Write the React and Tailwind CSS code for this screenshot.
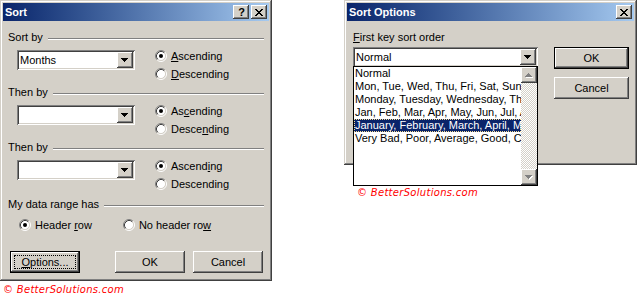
import React from 'react';

// classic 3D edges
const raised = 'shadow-[inset_-1px_-1px_#404040,inset_1px_1px_#ffffff,inset_-2px_-2px_#808080,inset_2px_2px_#d4d0c8]';
const sunken = 'shadow-[inset_1px_1px_#808080,inset_-1px_-1px_#ffffff,inset_2px_2px_#404040,inset_-2px_-2px_#d4d0c8]';
const frame = 'shadow-[inset_-1px_-1px_#404040,inset_1px_1px_#d4d0c8,inset_-2px_-2px_#808080,inset_2px_2px_#ffffff]';
const defBtn = 'shadow-[inset_0_0_0_1px_#000000,inset_-2px_-2px_#404040,inset_2px_2px_#ffffff,inset_-3px_-3px_#808080,inset_3px_3px_#d4d0c8]';

const Arrow = ({ up, disabled }) => {
  const down = 'M0 0h7v1h-7z M1 1h5v1h-5z M2 2h3v1h-3z M3 3h1v1h-1z';
  const upD = 'M3 0h1v1h-1z M2 1h3v1h-3z M1 2h5v1h-5z M0 3h7v1h-7z';
  const d = up ? upD : down;
  return (
    <svg width="8" height="5" shapeRendering="crispEdges">
      {disabled && <path d={d} fill="#ffffff" transform="translate(1 1)" />}
      <path d={d} fill={disabled ? '#808080' : '#000000'} />
    </svg>
  );
};

const CloseGlyph = () => (
  <svg width="8" height="7" shapeRendering="crispEdges">
    <path
      fill="#000"
      d="M0 0h2v1h-2z M6 0h2v1h-2z M1 1h2v1h-2z M5 1h2v1h-2z M2 2h4v1h-4z M3 3h2v1h-2z M2 4h4v1h-4z M1 5h2v1h-2z M5 5h2v1h-2z M0 6h2v1h-2z M6 6h2v1h-2z"
    />
  </svg>
);

const CapBtn = ({ children, className = '' }) => (
  <div className={`w-[16px] h-[14px] bg-[#d4d0c8] flex items-center justify-center ${raised} ${className}`}>
    {children}
  </div>
);

const TitleBar = ({ title, help }) => (
  <div className="h-[18px] flex items-center pl-[2px] pr-[2px] bg-linear-to-r from-[#0a246a] to-[#a6caf0]">
    <span className="flex-1 text-white font-bold text-[11px]">{title}</span>
    {help && (
      <CapBtn className="mr-[2px]">
        <span className="font-bold text-[11px] leading-[11px] pl-[1px]">?</span>
      </CapBtn>
    )}
    <CapBtn>
      <CloseGlyph />
    </CapBtn>
  </div>
);

const Radio = ({ checked, children, className = '' }) => (
  <div className={`flex items-center h-[18px] ${className}`}>
    <svg width="12" height="12" className="shrink-0">
      <circle cx="6" cy="6" r="4.5" fill="#ffffff" />
      <path d="M2.11 9.89 A5.5 5.5 0 0 1 9.89 2.11" stroke="#808080" fill="none" />
      <path d="M9.89 2.11 A5.5 5.5 0 0 1 2.11 9.89" stroke="#ffffff" fill="none" />
      <path d="M2.82 9.18 A4.5 4.5 0 0 1 9.18 2.82" stroke="#404040" fill="none" />
      <path d="M9.18 2.82 A4.5 4.5 0 0 1 2.82 9.18" stroke="#d4d0c8" fill="none" />
      {checked && <circle cx="6" cy="6" r="2" fill="#000000" />}
    </svg>
    <span className="ml-[4px] whitespace-nowrap">{children}</span>
  </div>
);

const Combo = ({ value, className = '' }) => (
  <div className={`h-[20px] bg-white p-[2px] flex ${sunken} ${className}`}>
    <div className="flex-1 pl-[1px] flex items-center whitespace-nowrap overflow-hidden">{value}</div>
    <div className={`w-[16px] bg-[#d4d0c8] flex items-center justify-center ${raised}`}>
      <Arrow />
    </div>
  </div>
);

const Button = ({ children, isDefault, focused, className = '' }) => (
  <div className={`h-[22px] bg-[#d4d0c8] flex ${isDefault ? defBtn : raised} ${focused ? 'p-[4px]' : ''} ${className}`}>
    <div className={`flex-1 flex items-center justify-center ${focused ? 'border border-dotted border-black' : ''}`}>
      {children}
    </div>
  </div>
);

const Header = ({ children, className = '' }) => (
  <div className={`h-[13px] flex items-center ${className}`}>
    <span className="whitespace-nowrap">{children}</span>
    <div className="flex-1 ml-[5px] mt-[3px] border-t border-t-[#808080] border-b border-b-white" />
  </div>
);

const Group = ({ label, value, asc, desc, className = '' }) => (
  <div className={className}>
    <Header>{label}</Header>
    <div className="flex mt-[3px] h-[36px]">
      <Combo value={value} className="ml-[9px] mt-[3px] w-[118px]" />
      <div className="ml-[20px] flex flex-col">
        <Radio checked>{asc}</Radio>
        <Radio>{desc}</Radio>
      </div>
    </div>
  </div>
);

const Watermark = ({ className = '' }) => (
  <div className={`font-['DejaVu_Sans',sans-serif] italic text-[10px] tracking-[0.3px] leading-[12px] text-[#ff0000] whitespace-nowrap ${className}`}>
    © BetterSolutions.com
  </div>
);

const SortDialog = () => (
  <div className={`h-[281px] bg-[#d4d0c8] p-[3px] flex flex-col ${frame}`}>
    <TitleBar title="Sort" help />
    <div className="px-[5px] flex flex-col">
      <Group
        className="mt-[10px]"
        label="Sort by"
        value="Months"
        asc={<><u>A</u>scending</>}
        desc={<><u>D</u>escending</>}
      />
      <Group
        className="mt-[3px]"
        label="Then by"
        value=""
        asc={<>As<u>c</u>ending</>}
        desc={<>Desce<u>n</u>ding</>}
      />
      <Group
        className="mt-[3px]"
        label="Then by"
        value=""
        asc={<>Ascend<u>i</u>ng</>}
        desc={<>Descendin<u>g</u></>}
      />
      <Header className="mt-[5px]">My data range has</Header>
      <div className="flex mt-[5px]">
        <Radio checked className="ml-[11px]">Header <u>r</u>ow</Radio>
        <Radio className="ml-[31px]">No header ro<u>w</u></Radio>
      </div>
      <div className="flex mt-[17px]">
        <Button isDefault focused className="ml-[2px] w-[70px]"><span><u>O</u>ptions...</span></Button>
        <Button className="ml-[35px] w-[70px]">OK</Button>
        <Button className="ml-[8px] w-[70px]">Cancel</Button>
      </div>
    </div>
  </div>
);

const items = [
  'Normal',
  'Mon, Tue, Wed, Thu, Fri, Sat, Sun',
  'Monday, Tuesday, Wednesday, Thursday, Friday, Saturday, Sunday',
  'Jan, Feb, Mar, Apr, May, Jun, Jul, Aug, Sep, Oct, Nov, Dec',
  'January, February, March, April, May, June, July, August',
  'Very Bad, Poor, Average, Good, Cool',
];

const ScrollBtn = ({ up }) => (
  <div className={`h-[16px] bg-[#d4d0c8] flex items-center justify-center ${raised}`}>
    <Arrow up={up} disabled />
  </div>
);

const DropList = () => (
  <div className="absolute left-[9px] top-[66px] w-[185px] h-[120px] border border-black bg-white flex">
    <div className="flex-1 flex flex-col overflow-hidden">
      {items.map((t, i) => (
        <div
          key={i}
          className={`h-[13px] leading-[11px] whitespace-nowrap ${
            i === 4 ? 'bg-[#0a246a] text-white border border-dotted border-[#f5db95]' : 'px-[1px] py-[1px]'
          }`}
        >
          {t}
        </div>
      ))}
    </div>
    <div className="w-[16px] flex flex-col">
      <ScrollBtn up />
      <div className="flex-1 bg-[image:repeating-conic-gradient(#d4d0c8_0_25%,#ffffff_0_50%)] bg-[length:2px_2px]" />
      <ScrollBtn />
    </div>
  </div>
);

const OptionsDialog = () => (
  <div className={`relative h-[165px] bg-[#d4d0c8] p-[3px] flex flex-col ${frame}`}>
    <TitleBar title="Sort Options" />
    <div className="px-[5px] flex">
      <div className="flex flex-col ml-[1px]">
        <div className="mt-[10px] h-[13px] flex items-center"><span><u>F</u>irst key sort order</span></div>
        <Combo value="Normal" className="mt-[3px] w-[185px]" />
      </div>
      <div className="ml-[16px] mt-[26px] flex flex-col">
        <Button isDefault className="w-[75px]">OK</Button>
        <Button className="mt-[8px] w-[75px]">Cancel</Button>
      </div>
    </div>
    <DropList />
  </div>
);

export default function App() {
  return (
    <div className="w-[637px] h-[297px] bg-white flex items-start font-['Liberation_Sans',Arial,sans-serif] text-[11px] leading-[13px] text-black">
      <div className="w-[272px] flex flex-col">
        <SortDialog />
        <Watermark className="ml-[3px] mt-[3px]" />
      </div>
      <div className="ml-[72px] w-[293px] flex flex-col">
        <OptionsDialog />
        <Watermark className="ml-[13px] mt-[22px]" />
      </div>
    </div>
  );
}
